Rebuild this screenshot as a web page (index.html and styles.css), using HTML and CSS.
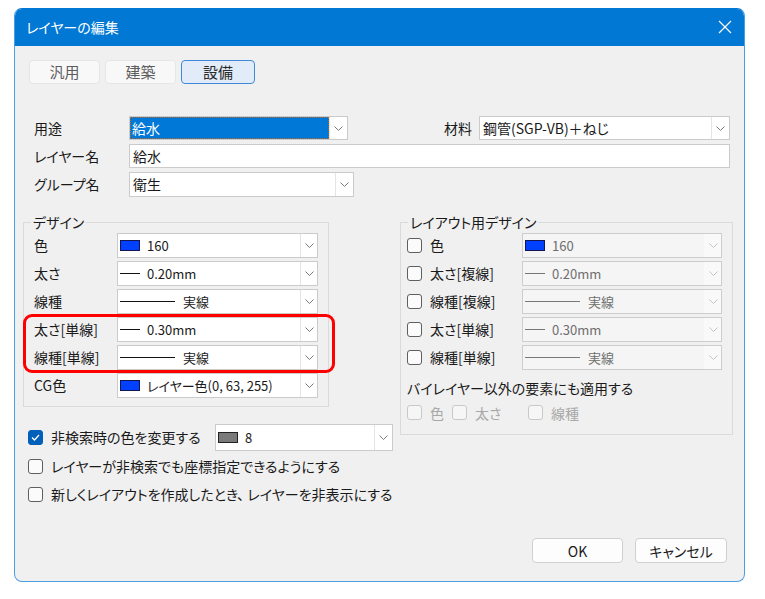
FILE: index.html
```html
<!DOCTYPE html>
<html lang="ja">
<head>
<meta charset="utf-8">
<title>レイヤーの編集</title>
<link rel="stylesheet" href="styles.css">
</head>
<body>
<div class="dialog">
  <div class="titlebar">
    <span class="title">レイヤーの編集</span>
    <svg class="close" width="14" height="14" viewBox="0 0 14 14"><path d="M1 1 L13 13 M13 1 L1 13" stroke="#fff" stroke-width="1.2" fill="none"/></svg>
  </div>
  <div class="content">
    <div class="tabs">
      <div class="tab">汎用</div>
      <div class="tab">建築</div>
      <div class="tab active">設備</div>
    </div>

    <div class="form">
      <div class="frow">
        <span class="flabel">用途</span>
        <div class="combo w-use"><span class="val focus">給水</span><span class="arrow"><svg width="9" height="5" viewBox="0 0 9 5"><polyline points="0.5,0.5 4.5,4.5 8.5,0.5" fill="none" stroke="#7a7a7a"/></svg></span></div>
        <span class="mlabel">材料</span>
        <div class="combo w-mat"><span class="val">鋼管(SGP-VB)＋ねじ</span><span class="arrow"><svg width="9" height="5" viewBox="0 0 9 5"><polyline points="0.5,0.5 4.5,4.5 8.5,0.5" fill="none" stroke="#7a7a7a"/></svg></span></div>
      </div>
      <div class="frow">
        <span class="flabel">レイヤー名</span>
        <div class="input"><span class="val">給水</span></div>
      </div>
      <div class="frow tall">
        <span class="flabel">グループ名</span>
        <div class="combo w-grp"><span class="val">衛生</span><span class="arrow"><svg width="9" height="5" viewBox="0 0 9 5"><polyline points="0.5,0.5 4.5,4.5 8.5,0.5" fill="none" stroke="#7a7a7a"/></svg></span></div>
      </div>
    </div>

    <div class="groups">
      <div class="leftcol">
        <fieldset class="group design">
          <legend>デザイン</legend>
          <div class="rows">
            <div class="drow"><span>色</span><div class="dd"><span class="val"><i class="sw"></i>160</span><span class="arrow"><svg width="9" height="5" viewBox="0 0 9 5"><polyline points="0.5,0.5 4.5,4.5 8.5,0.5" fill="none" stroke="#7a7a7a"/></svg></span></div></div>
            <div class="drow"><span>太さ</span><div class="dd"><span class="val"><i class="ln"></i>0.20mm</span><span class="arrow"><svg width="9" height="5" viewBox="0 0 9 5"><polyline points="0.5,0.5 4.5,4.5 8.5,0.5" fill="none" stroke="#7a7a7a"/></svg></span></div></div>
            <div class="drow"><span>線種</span><div class="dd"><span class="val"><i class="ln long"></i>実線</span><span class="arrow"><svg width="9" height="5" viewBox="0 0 9 5"><polyline points="0.5,0.5 4.5,4.5 8.5,0.5" fill="none" stroke="#7a7a7a"/></svg></span></div></div>
            <div class="drow"><span>太さ[単線]</span><div class="dd"><span class="val"><i class="ln"></i>0.30mm</span><span class="arrow"><svg width="9" height="5" viewBox="0 0 9 5"><polyline points="0.5,0.5 4.5,4.5 8.5,0.5" fill="none" stroke="#7a7a7a"/></svg></span></div></div>
            <div class="drow"><span>線種[単線]</span><div class="dd"><span class="val"><i class="ln long"></i>実線</span><span class="arrow"><svg width="9" height="5" viewBox="0 0 9 5"><polyline points="0.5,0.5 4.5,4.5 8.5,0.5" fill="none" stroke="#7a7a7a"/></svg></span></div></div>
            <div class="drow"><span>CG色</span><div class="dd"><span class="val"><i class="sw"></i>レイヤー色(0, 63, 255)</span><span class="arrow"><svg width="9" height="5" viewBox="0 0 9 5"><polyline points="0.5,0.5 4.5,4.5 8.5,0.5" fill="none" stroke="#7a7a7a"/></svg></span></div></div>
          </div>
        </fieldset>

        <div class="checks">
          <div class="crow first">
            <span class="cb checked"><svg width="9" height="7" viewBox="0 0 9 7"><polyline points="1,3.5 3.5,6 8,1" fill="none" stroke="#fff" stroke-width="1.3"/></svg></span>
            <span>非検索時の色を変更する</span>
            <div class="dd w-gray"><span class="val"><i class="sw gray"></i>8</span><span class="arrow"><svg width="9" height="5" viewBox="0 0 9 5"><polyline points="0.5,0.5 4.5,4.5 8.5,0.5" fill="none" stroke="#7a7a7a"/></svg></span></div>
          </div>
          <div class="crow"><span class="cb"></span><span>レイヤーが非検索でも座標指定できるようにする</span></div>
          <div class="crow"><span class="cb"></span><span>新しくレイアウトを作成したとき、 レイヤーを非表示にする</span></div>
        </div>
      </div>

      <fieldset class="group layout">
        <legend>レイアウト用デザイン</legend>
        <div class="rows">
          <div class="lrow"><span class="chk"><span class="cb"></span>色</span><div class="dd off"><span class="val"><i class="sw"></i>160</span><span class="arrow"><svg width="9" height="5" viewBox="0 0 9 5"><polyline points="0.5,0.5 4.5,4.5 8.5,0.5" fill="none" stroke="#c4c4c4"/></svg></span></div></div>
          <div class="lrow"><span class="chk"><span class="cb"></span>太さ[複線]</span><div class="dd off"><span class="val"><i class="ln"></i>0.20mm</span><span class="arrow"><svg width="9" height="5" viewBox="0 0 9 5"><polyline points="0.5,0.5 4.5,4.5 8.5,0.5" fill="none" stroke="#c4c4c4"/></svg></span></div></div>
          <div class="lrow"><span class="chk"><span class="cb"></span>線種[複線]</span><div class="dd off"><span class="val"><i class="ln long"></i>実線</span><span class="arrow"><svg width="9" height="5" viewBox="0 0 9 5"><polyline points="0.5,0.5 4.5,4.5 8.5,0.5" fill="none" stroke="#c4c4c4"/></svg></span></div></div>
          <div class="lrow"><span class="chk"><span class="cb"></span>太さ[単線]</span><div class="dd off"><span class="val"><i class="ln"></i>0.30mm</span><span class="arrow"><svg width="9" height="5" viewBox="0 0 9 5"><polyline points="0.5,0.5 4.5,4.5 8.5,0.5" fill="none" stroke="#c4c4c4"/></svg></span></div></div>
          <div class="lrow"><span class="chk"><span class="cb"></span>線種[単線]</span><div class="dd off"><span class="val"><i class="ln long"></i>実線</span><span class="arrow"><svg width="9" height="5" viewBox="0 0 9 5"><polyline points="0.5,0.5 4.5,4.5 8.5,0.5" fill="none" stroke="#c4c4c4"/></svg></span></div></div>
        </div>
        <div class="note">バイレイヤー以外の要素にも適用する</div>
        <div class="offchecks">
          <span class="chk dis c1"><span class="cb"></span>色</span>
          <span class="chk dis c2"><span class="cb"></span>太さ</span>
          <span class="chk dis"><span class="cb"></span>線種</span>
        </div>
      </fieldset>
    </div>

    <div class="footer">
      <button class="btn ok">OK</button>
      <button class="btn cancel">キャンセル</button>
    </div>
  </div>
  <div class="highlight"></div>
</div>
</body>
</html>
```

FILE: styles.css
```css
* { box-sizing: border-box; }
html, body { margin: 0; padding: 0; background: #ffffff; }
body {
  font-family: "Noto Sans CJK JP", "Noto Sans", sans-serif;
  font-size: 14px;
  color: #1a1a1a;
  font-feature-settings: "palt";
}

.dialog {
  position: relative;
  margin: 8px 0 0 14px;
  width: 731px;
  height: 574px;
  border: 1px solid #4d9de6;
  border-top-color: #0078d4;
  border-radius: 8px;
  background: #f0f0f0;
  overflow: hidden;
  display: flex;
  flex-direction: column;
}

.titlebar {
  height: 37px;
  flex: none;
  background: #0078d4;
  color: #ffffff;
  display: flex;
  align-items: center;
  justify-content: space-between;
  padding: 0 12px 0 11px;
}
.title { font-size: 14px; line-height: 1.2; padding-bottom: 1px; }
.close { display: block; margin-top: -1px; }

.content {
  flex: 1;
  display: flex;
  flex-direction: column;
  padding-top: 14px;
}

.tabs { display: flex; gap: 5px; margin-left: 14px; }
.tab {
  width: 71px;
  height: 24px;
  border: 1px solid #e6e6e6;
  border-radius: 4px;
  background: #f8f8f8;
  color: #5c5c5c;
  display: flex;
  align-items: center;
  justify-content: center;
  font-size: 15px;
  line-height: 1.2;
}
.tab.active {
  width: 74px;
  background: #e1ecf8;
  border-color: #3f8ad8;
  color: #2a2a2a;
}

.form {
  margin-top: 32px;
  padding: 0 14px 0 19px;
  display: flex;
  flex-direction: column;
  gap: 4px;
}
.frow { display: flex; align-items: center; height: 24px; }
.frow.tall { height: 25px; }
.flabel { width: 95px; line-height: 1.2; }
.mlabel { margin-left: auto; margin-right: 7px; line-height: 1.2; }

.combo, .input, .dd {
  height: 100%;
  border: 1px solid #cbcbcb;
  background: #ffffff;
  display: flex;
}
.val {
  flex: 1;
  display: flex;
  align-items: center;
  padding-left: 3px;
  white-space: nowrap;
  line-height: 1.2;
  min-width: 0;
}
.val.focus {
  background: #0078d7;
  color: #ffffff;
  border: 1px dotted #c2661b;
  padding-left: 1px;
}
.arrow {
  width: 18px;
  flex: none;
  border-left: 1px solid #e4e4e4;
  display: flex;
  align-items: center;
  justify-content: center;
}
.arrow svg { display: block; }
.w-use { width: 219px; }
.w-mat { width: 251px; }
.w-grp { width: 225px; }
.input { flex: 1; }

.groups {
  margin-top: 17px;
  display: flex;
  gap: 5px;
  padding-left: 8px;
  align-items: flex-start;
}
.leftcol { width: 372px; }

.group {
  margin: 0;
  border: 1px solid #dadada;
  min-width: 0;
}
.group legend {
  padding: 0 2px;
  line-height: 16px;
  font-size: 14px;
}
.design {
  width: 306px;
  padding: 3px 10px 8px 10px;
}
.design legend { margin-left: -3px; }
.layout {
  width: 333px;
  padding: 3px 10px 11px 6px;
}
.layout legend { margin-left: 1px; }

.rows { display: flex; flex-direction: column; gap: 3px; }
.drow {
  display: grid;
  grid-template-columns: 83px 201px;
  height: 25px;
  align-items: center;
}
.drow > span { line-height: 1.2; }
.dd { height: 25px; }
.dd .val { font-size: 13px; padding-left: 2px; }
.dd .arrow { width: 17px; }

.sw {
  display: inline-block;
  width: 20px;
  height: 11px;
  background: #0040ff;
  border: 1px solid #141450;
  margin-right: 7px;
  flex: none;
}
.sw.gray { background: #7a7a7a; border-color: #222; }
.ln {
  display: inline-block;
  width: 20px;
  height: 1px;
  background: #111;
  margin-right: 7px;
  flex: none;
}
.ln.long { width: 55px; margin-right: 8px; }

.lrow {
  display: grid;
  grid-template-columns: 115px 200px;
  height: 25px;
  align-items: center;
}
.chk { display: flex; align-items: center; line-height: 1.2; }
.cb {
  width: 15px;
  height: 15px;
  border: 1px solid #5f5f5f;
  border-radius: 3px;
  background: #fbfbfb;
  margin-right: 8px;
  flex: none;
  display: flex;
  align-items: center;
  justify-content: center;
}
.cb.checked { background: #005fb8; border-color: #005fb8; }

.dd.off { background: #f5f5f5; border-color: #cdcdcd; color: #6e6e6e; }
.dd.off .arrow { border-left-color: transparent; background: #f9f9f9; }
.dd.off .ln { background: #777; }

.note { margin-top: 8px; height: 20px; line-height: 20px; }
.offchecks { margin-top: 5px; height: 20px; display: flex; align-items: center; color: #a8a8a8; }
.chk.dis .cb { border-color: #c9c9c9; background: #f6f6f6; }
.chk.dis.c1 { width: 45px; }
.chk.dis.c2 { width: 76px; }

.checks {
  margin-top: 17px;
  padding-left: 5px;
  display: flex;
  flex-direction: column;
  gap: 2px;
}
.crow { display: flex; align-items: center; height: 26px; line-height: 1.2; white-space: nowrap; }
.crow.first { width: 365px; height: 27px; }
.w-gray { width: 178px; height: 27px; margin-left: auto; }
.w-gray .arrow { width: 18px; }

.footer {
  margin-top: auto;
  display: flex;
  justify-content: flex-end;
  gap: 12px;
  padding: 0 17px 18px 0;
}
.btn {
  height: 25px;
  border: 1px solid #d0d0d0;
  border-radius: 4px;
  background: #fdfdfd;
  font-family: inherit;
  font-size: 14px;
  color: #1a1a1a;
  padding: 0;
  font-feature-settings: "palt";
}
.btn.ok { width: 91px; }
.btn.cancel { width: 92px; }

.highlight {
  position: absolute;
  left: 8px;
  top: 305px;
  width: 312px;
  height: 59px;
  border: 3px solid #ff0000;
  border-radius: 9px;
}
```
